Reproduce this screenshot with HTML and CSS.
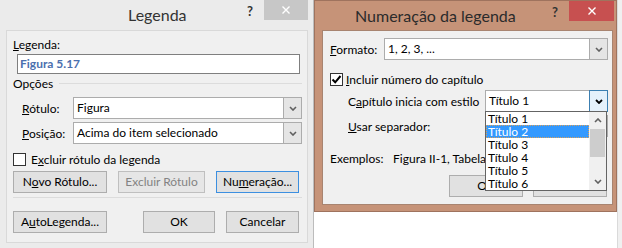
FILE: index.html
```html
<!DOCTYPE html>
<html lang="pt">
  <head>
    <meta charset="UTF-8" />
    <title>Legenda</title>
    <link rel="stylesheet" href="styles.css">
  </head>
  <body>
    <div class="screen">
      <section class="win win_left">
        <header class="titlebar">
          <span class="title title_left">Legenda</span>
          <span class="help">?</span>
          <span class="close">
            <svg width="8" height="8" viewBox="0 0 8 8"><path d="M0.5 0.5 L7.5 7.5 M7.5 0.5 L0.5 7.5" stroke="#fff" stroke-width="1.4" fill="none"/></svg>
          </span>
        </header>
        <div class="panel panel_left">
          <div class="cap_label"><span class="key">L</span>egenda:</div>
          <div class="textbox">Figura 5.17</div>
          <div class="group">
            <span>Opções</span>
            <span class="group_line"></span>
          </div>
          <div class="form_row first_row">
            <span class="row_label"><span class="key">R</span>ótulo:</span>
            <div class="combo">
              <span class="combo_value">Figura</span>
              <span class="combo_btn">
                <svg width="8" height="5" viewBox="0 0 8 5"><polyline points="1,1 4,4 7,1" stroke="#606060" stroke-width="1.6" fill="none"/></svg>
              </span>
            </div>
          </div>
          <div class="form_row second_row">
            <span class="row_label"><span class="key">P</span>osição:</span>
            <div class="combo">
              <span class="combo_value">Acima do item selecionado</span>
              <span class="combo_btn">
                <svg width="8" height="5" viewBox="0 0 8 5"><polyline points="1,1 4,4 7,1" stroke="#606060" stroke-width="1.6" fill="none"/></svg>
              </span>
            </div>
          </div>
          <div class="check_row">
            <span class="checkbox"></span>
            <span>E<span class="key">x</span>cluir rótulo da legenda</span>
          </div>
          <div class="button_row">
            <span class="btn btn_novo">N<span class="key">o</span>vo Rótulo...</span>
            <span class="btn btn_excluir disabled">Excluir Rótulo</span>
            <span class="btn btn_numeracao focused">Nu<span class="key">m</span>eração...</span>
          </div>
          <div class="separator"></div>
          <div class="button_row bottom_row">
            <span class="btn btn_novo">A<span class="key">u</span>toLegenda...</span>
            <span class="btn btn_ok">OK</span>
            <span class="btn btn_cancel">Cancelar</span>
          </div>
        </div>
      </section>

      <section class="win win_right">
        <header class="titlebar">
          <span class="title title_right">Numeração da legenda</span>
          <span class="help">?</span>
          <span class="close close_red">
            <svg width="8" height="8" viewBox="0 0 8 8"><path d="M0.5 0.5 L7.5 7.5 M7.5 0.5 L0.5 7.5" stroke="#fff" stroke-width="1.4" fill="none"/></svg>
          </span>
        </header>
        <div class="panel panel_right">
          <div class="form_row format_row">
            <span class="format_label"><span class="key">F</span>ormato:</span>
            <div class="combo">
              <span class="combo_value">1, 2, 3, ...</span>
              <span class="combo_btn">
                <svg width="8" height="5" viewBox="0 0 8 5"><polyline points="1,1 4,4 7,1" stroke="#606060" stroke-width="1.6" fill="none"/></svg>
              </span>
            </div>
          </div>
          <div class="check_row include_row">
            <span class="checkbox checked">
              <svg width="11" height="11" viewBox="0 0 11 11"><path d="M1.5 5.5 L4.2 8.3 L9.5 2" stroke="#000" stroke-width="2" fill="none"/></svg>
            </span>
            <span><span class="key">I</span>ncluir número do capítulo</span>
          </div>
          <div class="form_row sub_row">
            <span class="sub_label">C<span class="key">a</span>pítulo inicia com estilo</span>
            <div class="combo open">
              <span class="combo_value">Título 1</span>
              <span class="combo_btn">
                <svg width="8" height="5" viewBox="0 0 8 5"><polyline points="1,1 4,4 7,1" stroke="#000" stroke-width="1.8" fill="none"/></svg>
              </span>
            </div>
          </div>
          <div class="form_row sub_row">
            <span class="sub_label"><span class="key">U</span>sar separador:</span>
            <div class="combo">
              <span class="combo_value"></span>
              <span class="combo_btn"></span>
            </div>
          </div>
          <div class="example_row">
            <span class="example_label">Exemplos:</span>
            <span>Figura II-1, Tabela 1</span>
          </div>
          <div class="button_row right_buttons">
            <span class="btn btn_ok">OK</span>
            <span class="btn btn_ok">Cancelar</span>
          </div>

          <div class="dropdown">
            <div class="dropdown_items">
              <div class="dropdown_item">Título 1</div>
              <div class="dropdown_item selected">Título 2</div>
              <div class="dropdown_item">Título 3</div>
              <div class="dropdown_item">Título 4</div>
              <div class="dropdown_item">Título 5</div>
              <div class="dropdown_item">Título 6</div>
            </div>
            <div class="scrollbar">
              <span class="scroll_arrow">
                <svg width="8" height="5" viewBox="0 0 8 5"><polyline points="1,4 4,1 7,4" stroke="#606060" stroke-width="1.6" fill="none"/></svg>
              </span>
              <span class="scroll_thumb"></span>
              <span class="scroll_space"></span>
              <span class="scroll_arrow">
                <svg width="8" height="5" viewBox="0 0 8 5"><polyline points="1,1 4,4 7,1" stroke="#606060" stroke-width="1.6" fill="none"/></svg>
              </span>
            </div>
          </div>
        </div>
      </section>

      <div class="edge"></div>
    </div>
  </body>
</html>
```

FILE: styles.css
```css
body {
  margin: 0;
  font-family: "Lato", "Liberation Sans", sans-serif;
  font-size: 12px;
  color: #000;
  background-color: #fff;
}

.screen {
  display: flex;
  width: 622px;
  height: 248px;
  overflow: hidden;
}

.key {
  text-decoration: underline;
}

/* windows */

.win {
  flex: none;
  display: flex;
  flex-direction: column;
  box-sizing: border-box;
}

.win_left {
  width: 314px;
  height: 248px;
  background-color: #ebebeb;
  border-right: 1px solid #bcbcbc;
}

.win_right {
  width: 303px;
  height: 212px;
  background-color: #c69378;
  border: 1px solid #9f735e;
}

.titlebar {
  display: flex;
  align-items: flex-start;
  height: 30px;
  flex: none;
}

.win_right .titlebar {
  height: 29px;
}

.title {
  flex: 1;
  font-size: 16px;
  line-height: 30px;
  color: #333;
}

.title_left {
  padding-left: 128px;
}

.title_right {
  padding-left: 40px;
  line-height: 29px;
  color: #2b2b2b;
}

.help {
  font-weight: bold;
  font-size: 13px;
  line-height: 20px;
  margin-top: 1px;
  margin-right: 11px;
  color: #333;
}

.close {
  width: 44px;
  height: 20px;
  margin-right: 5px;
  background-color: #c7c7c7;
  display: flex;
  align-items: center;
  justify-content: center;
}

.close_red {
  width: 45px;
  margin-right: 2px;
  background-color: #c75050;
}

/* panels */

.panel {
  background-color: #f0f0f0;
  box-sizing: border-box;
}

.panel_left {
  height: 213px;
  margin: 0 5px 0 6px;
  padding: 0 5px 0 6px;
  border: 1px solid #d9d9d9;
}

.panel_right {
  position: relative;
  height: 175px;
  margin: 0 3px 0 7px;
  padding: 0 4px 0 7px;
  border: 1px solid #a88470;
}

.cap_label {
  margin-top: 6px;
  line-height: 16px;
  height: 16px;
}

.textbox {
  height: 20px;
  margin: 1px 2px 0 4px;
  padding-left: 2px;
  box-sizing: border-box;
  border: 1px solid #7f7f7f;
  background-color: #fff;
  line-height: 18px;
  font-weight: bold;
  color: #4b6fae;
}

.group {
  display: flex;
  align-items: center;
  height: 15px;
  margin-top: 2px;
}

.group_line {
  flex: 1;
  height: 1px;
  margin-left: 6px;
  background-color: #dcdcdc;
}

.form_row {
  display: flex;
  align-items: center;
  height: 22px;
}

.first_row {
  margin-top: 6px;
}

.second_row {
  margin-top: 3px;
}

.row_label {
  width: 60px;
  padding-left: 9px;
  box-sizing: border-box;
  flex: none;
}

.combo {
  flex: 1;
  display: flex;
  height: 22px;
  box-sizing: border-box;
  border: 1px solid #acacac;
  background-color: #fff;
}

.combo_value {
  flex: 1;
  padding-left: 3px;
  line-height: 20px;
  white-space: nowrap;
  overflow: hidden;
}

.combo_btn {
  width: 17px;
  display: flex;
  align-items: center;
  justify-content: center;
  background-color: #e5e5e5;
  border-left: 1px solid #acacac;
}

.combo.open .combo_btn {
  background-color: #e5f1fb;
  border: 1px solid #3c7fb1;
  margin: -1px -1px -1px 0;
}

.check_row {
  display: flex;
  align-items: center;
  height: 15px;
  margin-top: 8px;
}

.checkbox {
  width: 13px;
  height: 13px;
  margin-right: 5px;
  box-sizing: border-box;
  border: 1px solid #333;
  background-color: #fff;
  display: flex;
  align-items: center;
  justify-content: center;
}

.button_row {
  display: flex;
  margin-top: 4px;
  gap: 11px;
}

.btn {
  height: 22px;
  box-sizing: border-box;
  border: 1px solid #adadad;
  background-color: #e1e1e1;
  text-align: center;
  line-height: 20px;
}

.btn_novo {
  width: 94px;
}

.btn_excluir {
  width: 87px;
}

.btn_numeracao {
  width: 83px;
}

.btn_ok {
  width: 72px;
}

.btn_cancel {
  width: 73px;
}

.disabled {
  color: #838383;
  border-color: #bfbfbf;
  background-color: #e6e6e6;
}

.focused {
  border-color: #3c8fe0;
}

.separator {
  height: 1px;
  margin-top: 4px;
  background-color: #dcdcdc;
}

.bottom_row {
  margin-top: 13px;
}

.bottom_row .btn_ok {
  margin-left: 25px;
}

/* numbering dialog */

.format_row {
  margin-top: 7px;
}

.format_label {
  width: 54px;
  flex: none;
}

.include_row {
  margin-top: 12px;
}

.include_row .checkbox {
  margin-right: 3px;
}

.sub_row {
  margin-top: 3px;
}

.sub_label {
  width: 155px;
  padding-left: 18px;
  box-sizing: border-box;
  flex: none;
}

.example_row {
  width: 155px;
  margin-top: 14px;
  line-height: 16px;
  white-space: nowrap;
  overflow: hidden;
}

.example_label {
  display: inline-block;
  width: 60px;
}

.right_buttons {
  justify-content: flex-end;
  gap: 10px;
  margin-top: 8px;
  padding-right: 1px;
}

.right_buttons .btn_ok {
  width: 74px;
}

/* open list of the style combo */

.dropdown {
  position: absolute;
  left: 162px;
  top: 80px;
  width: 122px;
  height: 80px;
  box-sizing: border-box;
  border: 1px solid #646464;
  background-color: #fff;
  display: flex;
}

.dropdown_items {
  flex: 1;
}

.dropdown_item {
  height: 13px;
  line-height: 13px;
  padding-left: 2px;
  box-sizing: border-box;
}

.dropdown_item.selected {
  background-color: #3399ff;
  color: #fff;
  outline: 1px dotted #d9a05b;
  outline-offset: -1px;
}

.scrollbar {
  width: 17px;
  display: flex;
  flex-direction: column;
  background-color: #f0f0f0;
}

.scroll_arrow {
  height: 17px;
  display: flex;
  align-items: center;
  justify-content: center;
  flex: none;
}

.scroll_thumb {
  height: 28px;
  margin: 0 1px;
  background-color: #cdcdcd;
  flex: none;
}

.scroll_space {
  flex: 1;
}

.edge {
  flex: 1;
  background-color: #f0f0f0;
  border-left: 1px solid #dadada;
}
```
